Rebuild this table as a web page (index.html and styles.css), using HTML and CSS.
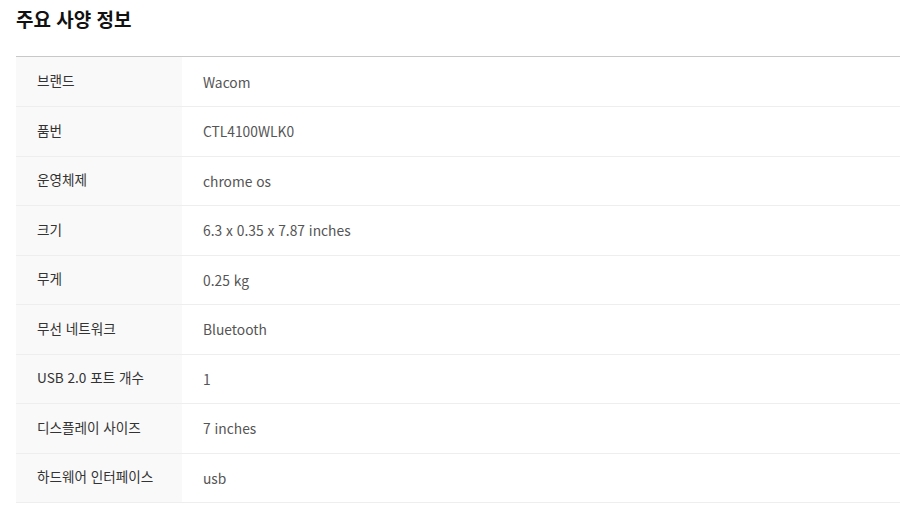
FILE: index.html
```html
<!DOCTYPE html>
<html lang="ko">
<head>
<meta charset="utf-8">
<link rel="stylesheet" href="styles.css">
</head>
<body>
<div class="spec">
  <h2 class="spec-title">주요 사양 정보</h2>
  <table class="spec-table">
    <tbody>
      <tr><th>브랜드</th><td>Wacom</td></tr>
      <tr><th>품번</th><td>CTL4100WLK0</td></tr>
      <tr><th>운영체제</th><td>chrome os</td></tr>
      <tr><th>크기</th><td>6.3 x 0.35 x 7.87 inches</td></tr>
      <tr><th>무게</th><td>0.25 kg</td></tr>
      <tr><th>무선 네트워크</th><td>Bluetooth</td></tr>
      <tr><th>USB 2.0 포트 개수</th><td>1</td></tr>
      <tr><th>디스플레이 사이즈</th><td>7 inches</td></tr>
      <tr><th>하드웨어 인터페이스</th><td>usb</td></tr>
    </tbody>
  </table>
</div>
</body>
</html>
```
FILE: styles.css
```css
html, body {
  margin: 0;
  padding: 0;
  background: #fff;
}
body {
  font-family: "Noto Sans CJK KR", "Noto Sans", sans-serif;
  color: #333;
}
.spec {
  padding: 0 0 0 16px;
}
.spec-title {
  margin: 0;
  padding-top: 6px;
  font-size: 19px;
  font-weight: 700;
  line-height: 26px;
  color: #111;
  border-bottom: 1px solid #c8c8c8;
  box-sizing: border-box;
  height: 57px;
}
.spec-table {
  width: 100%;
  border-collapse: collapse;
}
.spec-table tr {
  height: 49.5px;
  border-bottom: 1px solid #eeeeee;
}
.spec-table th {
  width: 145px;
  padding: 0 0 3px 21px;
  text-align: left;
  vertical-align: middle;
  font-size: 13.6px;
  font-weight: 400;
  color: #333;
  background: #f9f9f9;
}
.spec-table td {
  padding: 0 0 0 21px;
  vertical-align: middle;
  font-size: 13.8px;
  color: #555;
}
```
